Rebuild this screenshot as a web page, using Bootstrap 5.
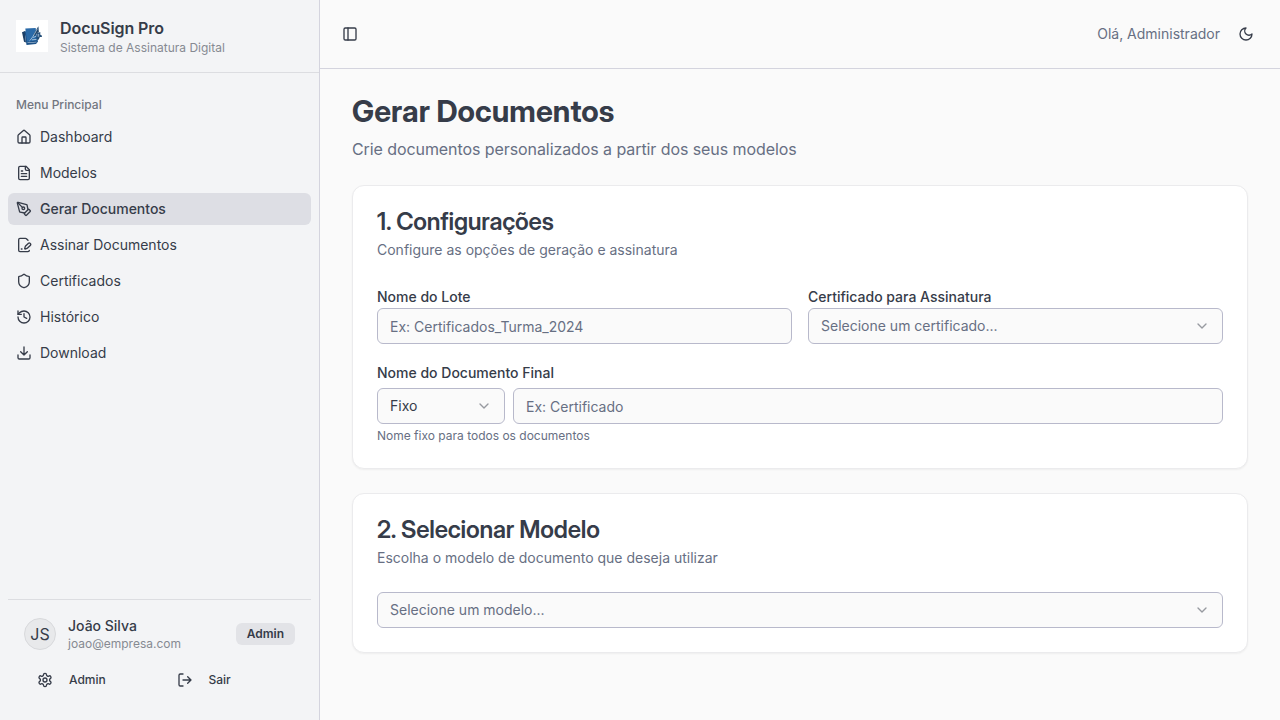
<!DOCTYPE html>
<html lang="pt-BR">
<head>
<meta charset="utf-8">
<meta name="viewport" content="width=device-width, initial-scale=1">
<title>DocuSign Pro</title>
<link href="https://cdn.jsdelivr.net/npm/bootstrap@5.3.0/dist/css/bootstrap.min.css" rel="stylesheet">
<style>
:root{--ink:#363c49;--muted:#676f83;--field-line:#b8b9cb;--line:#d4d4de;--page:#fafafa}
body{font-family:Inter,"Liberation Sans",sans-serif;font-size:16px;line-height:24px;color:var(--ink);background:var(--page)}
h1,h2,p{margin:0}
.t14{font-size:14px;line-height:20px}
.t12{font-size:12px;line-height:16px}
.t16{letter-spacing:-.08px}
.muted{color:var(--muted)}
.soft{color:#868a92}
.ico{width:16px;height:16px;flex:none;fill:none;stroke:currentColor;stroke-width:2;stroke-linecap:round;stroke-linejoin:round;display:block}
.side{width:320px;background:#f3f4f6;border-right:1px solid var(--line)}
.brand{border-bottom:1px solid #dcdde1;gap:12px}
.menu-title{height:32px;color:#72767f;font-weight:500}
.side .nav{gap:4px}
.side .nav-link{height:32px;padding:8px;gap:8px;border-radius:6px;color:var(--ink);font-size:14px;line-height:20px}
.side .nav-link.active{background:#dddee4;font-weight:500}
.foot{border-top:1px solid #dcdde1;margin:0 8px 8px;padding:16px}
.avatar{width:32px;height:32px;background:#e8e9eb;border:1px solid #d8d9dc}
.side .badge{font-size:12px;line-height:16px;font-weight:600;padding:2px 10px;border:1px solid transparent;border-radius:6px;background:#e2e3e7;color:var(--ink)}
.foot .btn{height:32px;flex:1 1 0;gap:16px;padding:0 12px;font-size:12px;font-weight:500;color:var(--ink)}
.topbar{height:69px;border-bottom:1px solid var(--line);padding:0 16px}
.square{width:28px;height:28px;padding:0;color:var(--ink)}
.square-lg{width:36px;height:36px}
.content{padding:24px 32px;gap:24px}
h1,h2{font-family:"Inter Display",Inter,sans-serif}
h1{font-size:30px;line-height:36px;font-weight:700;letter-spacing:.06px}
h2{font-size:24px;line-height:24px;font-weight:600;letter-spacing:-.2px}
.card{border:1px solid #ebebed;border-radius:12px;box-shadow:0 1px 2px rgba(0,0,0,.05);padding:24px;gap:24px}
.form-label{display:block;margin:0;font-size:14px;line-height:26px;height:24px;font-weight:500}
.field{height:36px;border:1px solid var(--field-line);border-radius:6px;background-color:var(--page);padding:0 12px;font-size:14px;line-height:20px;color:var(--ink);width:100%}
.field::placeholder{color:var(--muted);opacity:1}
input.field{padding:5px 12px 4px}
.pick{padding-bottom:1px}
.pick.muted{color:var(--muted)}
.pick .ico{opacity:.5;color:var(--ink)}
.kind{width:128px;flex:none}
</style>
</head>
<body>
<div class="d-flex vh-100 overflow-hidden">
  <aside class="side d-flex flex-column flex-shrink-0">
    <div class="brand d-flex align-items-center p-3">
      <svg width="32" height="32" viewBox="0 0 32 32" class="flex-shrink-0" aria-hidden="true">
        <path fill="#fff" d="M0 0h32v32H0z"/>
        <path fill="#1c3f66" d="M6 12.2l3-1.2v3.5l1 8-2-.8z"/>
        <path fill="#1d5288" d="M8.5 11.5l11-2 2.5 12-2 2.5-9.5 1z"/>
        <path fill="#2a6aa8" d="M9.3 8.4l10.4-.4.8 12.6-9.4 1.2z"/>
        <path fill="#d4e0ec" d="M11.5 22.6l9-.8v.5l-9 .8z"/>
        <path fill="#234e78" d="M21 12.5l3.4-.3-.2 2.3 1.8 1.2-.2 1.2-2 .2-1 2.4-2.2.4z"/>
        <path fill="#7f9fbd" d="M21.6 13.8h1.6v3h-1.6z"/>
        <path fill="#1f4468" d="M17.5 14.5l2.5-4.5 2.4-3.8.4 5-2 2.2-2.6 2.6z"/>
        <path fill="none" stroke="#bdd0e2" stroke-width=".8" d="M13.5 20.8c2.4-2 4-5.3 7.8-12M16 19.8l4.5-.4M17.2 17.6l3-1.4"/>
      </svg>
      <div>
        <div class="fw-semibold t16">DocuSign Pro</div>
        <div class="t12 soft">Sistema de Assinatura Digital</div>
      </div>
    </div>
    <div class="flex-grow-1 px-2 pt-3">
      <div class="menu-title t12 px-2 d-flex align-items-center">Menu Principal</div>
      <nav class="nav flex-column">
        <a class="nav-link d-flex align-items-center" href="#"><svg class="ico" viewBox="0 0 24 24"><path d="M15 21v-8a1 1 0 0 0-1-1h-4a1 1 0 0 0-1 1v8"/><path d="M3 10a2 2 0 0 1 .709-1.528l7-5.999a2 2 0 0 1 2.582 0l7 5.999A2 2 0 0 1 21 10v9a2 2 0 0 1-2 2H5a2 2 0 0 1-2-2z"/></svg>Dashboard</a>
        <a class="nav-link d-flex align-items-center" href="#"><svg class="ico" viewBox="0 0 24 24"><path d="M15 2H6a2 2 0 0 0-2 2v16a2 2 0 0 0 2 2h12a2 2 0 0 0 2-2V7Z"/><path d="M14 2v4a2 2 0 0 0 2 2h4M10 9H8M16 13H8M16 17H8"/></svg>Modelos</a>
        <a class="nav-link active d-flex align-items-center" href="#"><svg class="ico" viewBox="0 0 24 24"><path d="M15.707 21.293a1 1 0 0 1-1.414 0l-1.586-1.586a1 1 0 0 1 0-1.414l5.586-5.586a1 1 0 0 1 1.414 0l1.586 1.586a1 1 0 0 1 0 1.414z"/><path d="m18 13-1.375-6.874a1 1 0 0 0-.746-.776L3.235 2.028a1 1 0 0 0-1.207 1.207L5.35 15.879a1 1 0 0 0 .776.746L13 18"/><path d="m2.3 2.3 7.286 7.286"/><circle cx="11" cy="11" r="2"/></svg>Gerar Documentos</a>
        <a class="nav-link d-flex align-items-center" href="#"><svg class="ico" viewBox="0 0 24 24"><path d="m18 5-2.414-2.414A2 2 0 0 0 14.172 2H6a2 2 0 0 0-2 2v16a2 2 0 0 0 2 2h12a2 2 0 0 0 2-2"/><path d="M21.378 12.626a1 1 0 0 0-3.004-3.004l-4.01 4.012a2 2 0 0 0-.506.854l-.837 2.87a.5.5 0 0 0 .62.62l2.87-.837a2 2 0 0 0 .854-.506z"/><path d="M8 18h1"/></svg>Assinar Documentos</a>
        <a class="nav-link d-flex align-items-center" href="#"><svg class="ico" viewBox="0 0 24 24"><path d="M20 13c0 5-3.5 7.5-7.66 8.95a1 1 0 0 1-.67-.01C7.5 20.5 4 18 4 13V6a1 1 0 0 1 1-1c2 0 4.5-1.2 6.24-2.72a1.17 1.17 0 0 1 1.52 0C14.51 3.81 17 5 19 5a1 1 0 0 1 1 1z"/></svg>Certificados</a>
        <a class="nav-link d-flex align-items-center" href="#"><svg class="ico" viewBox="0 0 24 24"><path d="M3 12a9 9 0 1 0 9-9 9.75 9.75 0 0 0-6.74 2.74L3 8"/><path d="M3 3v5h5M12 7v5l4 2"/></svg>Histórico</a>
        <a class="nav-link d-flex align-items-center" href="#"><svg class="ico" viewBox="0 0 24 24"><path d="M21 15v4a2 2 0 0 1-2 2H5a2 2 0 0 1-2-2v-4M7 10l5 5 5-5M12 15V3"/></svg>Download</a>
      </nav>
    </div>
    <div class="foot">
      <div class="d-flex align-items-center" style="gap:12px">
        <div class="avatar rounded-circle d-flex align-items-center justify-content-center">JS</div>
        <div class="flex-grow-1">
          <div class="t14" style="font-weight:500">João Silva</div>
          <div class="t12 soft">joao@empresa.com</div>
        </div>
        <span class="badge">Admin</span>
      </div>
      <div class="d-flex gap-2" style="margin-top:12px">
        <button class="btn d-flex align-items-center"><svg class="ico" viewBox="0 0 24 24"><path d="M12.22 2h-.44a2 2 0 0 0-2 2v.18a2 2 0 0 1-1 1.73l-.43.25a2 2 0 0 1-2 0l-.15-.08a2 2 0 0 0-2.73.73l-.22.38a2 2 0 0 0 .73 2.73l.15.1a2 2 0 0 1 1 1.72v.51a2 2 0 0 1-1 1.74l-.15.09a2 2 0 0 0-.73 2.73l.22.38a2 2 0 0 0 2.73.73l.15-.08a2 2 0 0 1 2 0l.43.25a2 2 0 0 1 1 1.73V20a2 2 0 0 0 2 2h.44a2 2 0 0 0 2-2v-.18a2 2 0 0 1 1-1.73l.43-.25a2 2 0 0 1 2 0l.15.08a2 2 0 0 0 2.73-.73l.22-.39a2 2 0 0 0-.73-2.73l-.15-.08a2 2 0 0 1-1-1.74v-.5a2 2 0 0 1 1-1.74l.15-.09a2 2 0 0 0 .73-2.73l-.22-.38a2 2 0 0 0-2.73-.73l-.15.08a2 2 0 0 1-2 0l-.43-.25a2 2 0 0 1-1-1.73V4a2 2 0 0 0-2-2z"/><circle cx="12" cy="12" r="3"/></svg>Admin</button>
        <button class="btn d-flex align-items-center"><svg class="ico" viewBox="0 0 24 24"><path d="M9 21H5a2 2 0 0 1-2-2V5a2 2 0 0 1 2-2h4M16 17l5-5-5-5M21 12H9"/></svg>Sair</button>
      </div>
    </div>
  </aside>

  <div class="flex-grow-1 d-flex flex-column">
    <header class="topbar d-flex align-items-center justify-content-between">
      <button class="btn square d-flex align-items-center justify-content-center" aria-label="Menu"><svg class="ico" viewBox="0 0 24 24"><rect width="18" height="18" x="3" y="3" rx="2"/><path d="M9 3v18"/></svg></button>
      <div class="d-flex align-items-center gap-2">
        <span class="t14 muted">Olá, Administrador</span>
        <button class="btn square square-lg d-flex align-items-center justify-content-center" aria-label="Tema"><svg class="ico" viewBox="0 0 24 24"><path d="M12 3a6 6 0 0 0 9 9 9 9 0 1 1-9-9Z"/></svg></button>
      </div>
    </header>
    <main class="content d-flex flex-column">
      <div class="d-flex flex-column gap-2">
        <h1>Gerar Documentos</h1>
        <p class="muted t16">Crie documentos personalizados a partir dos seus modelos</p>
      </div>
      <section class="card">
        <div class="d-flex flex-column" style="gap:6px">
          <h2>1. Configurações</h2>
          <p class="t14 muted">Configure as opções de geração e assinatura</p>
        </div>
        <div>
          <div class="row gx-3">
            <div class="col-6">
              <label class="form-label" for="lote">Nome do Lote</label>
              <input class="field" id="lote" placeholder="Ex: Certificados_Turma_2024">
            </div>
            <div class="col-6">
              <label class="form-label">Certificado para Assinatura</label>
              <button class="field pick muted d-flex align-items-center justify-content-between" type="button">Selecione um certificado...<svg class="ico" viewBox="0 0 24 24"><path d="m6 9 6 6 6-6"/></svg></button>
            </div>
          </div>
          <label class="form-label mt-3" for="nome">Nome do Documento Final</label>
          <div class="d-flex gap-2 my-1">
            <button class="field pick kind d-flex align-items-center justify-content-between" type="button">Fixo<svg class="ico" viewBox="0 0 24 24"><path d="m6 9 6 6 6-6"/></svg></button>
            <input class="field" id="nome" placeholder="Ex: Certificado">
          </div>
          <p class="t12 muted">Nome fixo para todos os documentos</p>
        </div>
      </section>
      <section class="card">
        <div class="d-flex flex-column" style="gap:6px">
          <h2>2. Selecionar Modelo</h2>
          <p class="t14 muted">Escolha o modelo de documento que deseja utilizar</p>
        </div>
        <button class="field pick muted d-flex align-items-center justify-content-between" type="button">Selecione um modelo...<svg class="ico" viewBox="0 0 24 24"><path d="m6 9 6 6 6-6"/></svg></button>
      </section>
    </main>
  </div>
</div>
<script src="https://cdn.jsdelivr.net/npm/bootstrap@5.3.0/dist/js/bootstrap.bundle.min.js"></script>
</body>
</html>
